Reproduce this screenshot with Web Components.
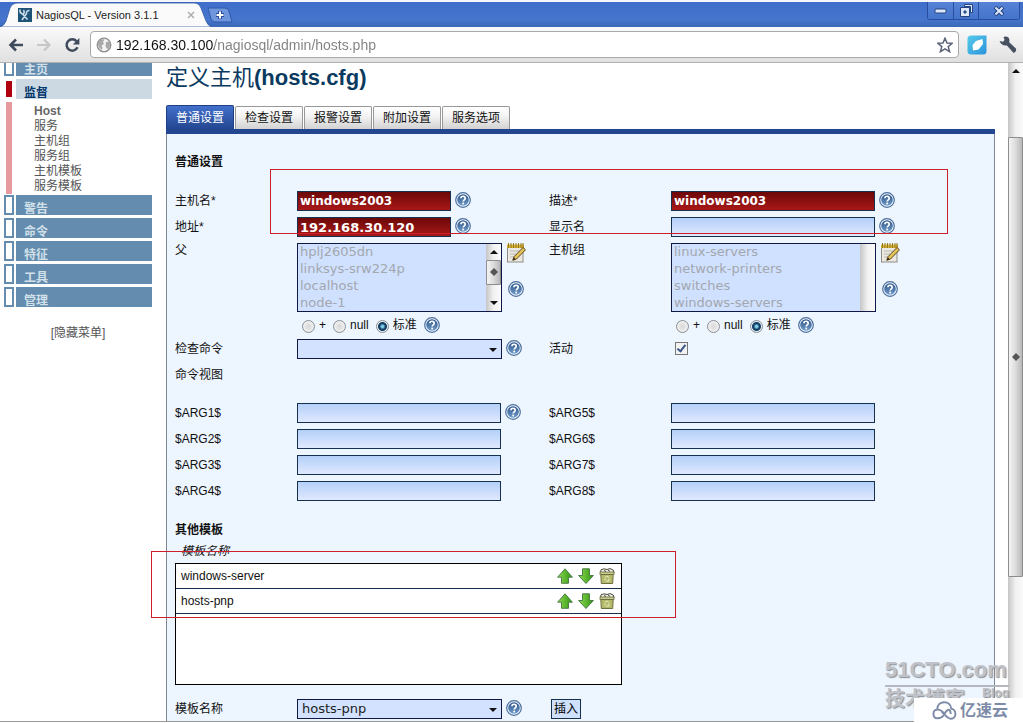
<!DOCTYPE html>
<html lang="zh-CN">
<head>
<meta charset="utf-8">
<title>NagiosQL - Version 3.1.1</title>
<style>
html, body { margin: 0; height: 100%; }
body { font: 12px/16px "Liberation Sans", "Noto Sans CJK SC", sans-serif; color: #111; background: #fff; overflow: hidden; }
</style>
</head>
<body>
<nq-browser></nq-browser>

<script>
const define = (name, html, setup) => {
  const template = document.createElement('template');
  template.innerHTML = html;
  customElements.define(name, class extends HTMLElement {
    constructor() {
      super();
      this.attachShadow({ mode: 'open' }).append(template.content.cloneNode(true));
    }
    connectedCallback() {
      if (setup && !this.ready) { this.ready = true; setup(this, this.shadowRoot); }
    }
  });
};

/* ---------- icons ---------- */
const icons = {
  help: `<svg viewBox="0 0 16 16"><defs><linearGradient id="g" x2="0" y2="1"><stop stop-color="#2d5488"/><stop offset="1" stop-color="#6f9bc9"/></linearGradient></defs><circle cx="8" cy="8" r="7.3" fill="#f4f8ff" stroke="#4b6f9e" stroke-width="1.2"/><circle cx="8" cy="8" r="5.8" fill="url(#g)"/><path d="M5.9 6.3C5.9 3.6 10.2 3.6 10.2 6.2C10.2 7.8 8.2 7.8 8.2 9.5" fill="none" stroke="#fff" stroke-width="1.7"/><rect x="7.3" y="10.6" width="1.8" height="1.8" fill="#fff"/></svg>`,
  edit: `<svg viewBox="0 0 20 20"><rect x="1.5" y="3" width="15.5" height="16" fill="#ece9e2" stroke="#8f8c86"/><rect x="1" y="1.5" width="17" height="3.5" fill="#d9b53a"/><path d="M2.5 0v5M5 0v5M7.500 0v5M10 0v5M12.500 0v5M15 0v5M17 0v5" stroke="#8a6d14" stroke-width=".9"/><path d="M4 8h9M4 11h6M4 14h4" stroke="#b9b6b0"/><path d="M17 4.500l2.500 2.300-9 9.200-3.700 1.200 1.300-3.600z" fill="#e3c45a" stroke="#5b451a" stroke-width="1"/><path d="M6.500 17.500l1.500-3 1.700 1.800z" fill="#2c2414"/></svg>`,
  up: `<svg viewBox="0 0 16 16"><defs><linearGradient id="g"><stop stop-color="#8edb52"/><stop offset="1" stop-color="#2f9410"/></linearGradient></defs><path d="M8 .8L15.400 9.200H11.500V15.300H4.500V9.200H.6z" fill="url(#g)" stroke="#4f7d4a"/></svg>`,
  down: `<svg viewBox="0 0 16 16"><defs><linearGradient id="g"><stop stop-color="#8edb52"/><stop offset="1" stop-color="#2f9410"/></linearGradient></defs><path d="M8 15.500L15.400 7.500H11.500V.8H4.500V7.500H.6z" fill="url(#g)" stroke="#4f7d4a"/></svg>`,
  trash: `<svg viewBox="0 0 16 16"><path d="M1.500 5L2 1.800 5 .8 8 1.500 11 .6 14.200 2 15 5z" fill="#f2f2ea" stroke="#4b4a3c"/><path d="M5 2.500l2 1M9 2l2 1.500" stroke="#444"/><rect x="1" y="4" width="14" height="2.500" fill="#c9cb92" stroke="#6b6c3c" stroke-width=".8"/><path d="M1.800 6.500H14.200L13.700 15.500H2.300z" fill="#b4b96c" stroke="#6f7040"/><path d="M6 9.500l2-1.500 2 1.500M10 10.500v2.500H7M6 12.500v-2" fill="none" stroke="#e9edc0"/></svg>`,
  back: `<svg viewBox="0 0 16 16"><path d="M15 8H3M8 2.500L2.500 8 8 13.500" fill="none" stroke="#3f4a5c" stroke-width="2.600"/></svg>`,
  forward: `<svg viewBox="0 0 16 16"><path d="M1 8H13M8 2.500L13.500 8 8 13.500" fill="none" stroke="#c6c6c8" stroke-width="2.200"/></svg>`,
  reload: `<svg viewBox="0 0 16 16"><path d="M12.600 4.200A5.700 5.700 0 1 0 13.500 10.300" fill="none" stroke="#3f4a5c" stroke-width="2.500"/><path d="M15.400 1V7.600H8.800z" fill="#3f4a5c"/></svg>`,
  globe: `<svg viewBox="0 0 16 16"><circle cx="8" cy="8" r="6.800" fill="#f4f4f4" stroke="#8d8d8d" stroke-width="1.300"/><path d="M3 3.500Q6 1.500 8.500 2.500L7 5 8 7 5.500 8.500 6.500 11 5.500 13Q2 10 1.800 6.500zM10 5l3.500-.5Q15 8 13 11.500L11 12 9.500 9z" fill="#a9a9a9"/></svg>`,
  star: `<svg viewBox="0 0 16 16"><path d="M8 1.200L10 6 15.200 6.300 11.200 9.600 12.600 14.700 8 11.800 3.400 14.700 4.800 9.600.8 6.300 6 6z" fill="#fff" stroke="#5c6478" stroke-width="1.500"/></svg>`,
  feather: `<svg viewBox="0 0 20 20"><defs><linearGradient id="g" x2="1" y2="1"><stop stop-color="#56cbe8"/><stop offset="1" stop-color="#2a92dd"/></linearGradient></defs><path d="M4 .5H19.500V16Q19.500 19.500 16 19.500H4Q.5 19.500.5 16V4Q.5.5 4 .5z" fill="url(#g)"/><path d="M9 6L15.500 4 16 9 11.500 14.500 6 15.500 5.500 10z" fill="#fff"/></svg>`,
  wrench: `<svg viewBox="0 0 16 16"><path d="M.5 4.500L3.500 5 5 3.500 4 .8Q8.500-.3 9.300 3.500L9.100 5.500 15 11.200Q16 14 13 15L7 8.400Q2 9 .5 4.500z" fill="#46505f"/></svg>`,
  favicon: `<svg viewBox="0 0 14 14"><rect width="14" height="14" fill="#1e5377"/><path d="M2 1.500Q1.500 5 4.500 6L9.500 11.500M5.500 2Q7 4 5.500 6M11.500 2.500Q8 2.500 8.500 5.500L4 12" fill="none" stroke="#c9dce8" stroke-width="1.600"/></svg>`,
  cloud: `<svg viewBox="0 0 26 20"><g fill="none" stroke="#7d8ba8" stroke-width="2"><path d="M5.500 8.500C5.500-1 19.500-1 20 8"/><path d="M13 13.500C9 7.500 1.500 7.500 1.500 13.500S9.500 19.500 13 13.500 19 8 19.500 13.500"/><path d="M19.500 8C26 8 26 19 19.500 18.500 16 18.500 13 14 10 11"/></g></svg>`
};
customElements.define('nq-icon', class extends HTMLElement {
  connectedCallback() {
    if (this.shadowRoot) return;
    const size = this.getAttribute('size') || '16';
    this.attachShadow({ mode: 'open' }).innerHTML =
      `<style>:host{display:block;flex:none;width:${size}px}svg{display:block;width:100%}</style>` + icons[this.getAttribute('name')];
  }
});

/* ---------- title strip with the page tab ---------- */
define('nq-titlebar', `
<style>
:host { display: flex; justify-content: space-between; height: 25px; border-top: 2px solid #f3f5f8; background: linear-gradient(#3f6ecb, #4575cc 70%, #3c68b8); }
.left { display: flex; }
.tab { position: relative; display: flex; align-items: center; box-sizing: border-box; width: 212px; padding: 0 17px 0 18px; font-size: 11px; }
.tab .shape { position: absolute; left: 0; top: 0; width: 212px; height: 25px; }
.tab > :not(.shape) { position: relative; }
.title { flex: 1; margin-left: 4px; color: #222; white-space: nowrap; }
button { font: inherit; padding: 0; border: 0; background: none; display: grid; place-items: center; }
.new { margin-left: -4px; }
.new svg { display: block; width: 26px; height: 16px; }
.win { display: flex; height: 17px; margin-right: 3px; border: 1px solid #274d9c; border-top: 0; border-radius: 0 0 3px 3px; }
.win button { width: 25px; background: linear-gradient(#5682d6, #4474cb); }
.win button + button { border-left: 1px solid #274d9c; }
.win button:last-child { width: 41px; }
</style>
<div class="left">
  <div class="tab">
    <svg class="shape" viewBox="0 0 212 25"><path d="M0 25Q4 24 6 19L10 6Q12 1 18 1H194Q199 1 201 6L206 19Q208 24 212 25z" fill="#fafafa" stroke="#2f59a8" stroke-width=".8"/></svg>
    <nq-icon name="favicon" size="14"></nq-icon>
    <span class="title">NagiosQL - Version 3.1.1</span>
    <button aria-label="Close tab"><svg width="8" height="8" viewBox="0 0 8 8"><path d="M1 1l6 6M7 1L1 7" stroke="#aaa" stroke-width="1.400"/></svg></button>
  </div>
  <button class="new" aria-label="New tab"><svg viewBox="0 0 26 16"><path d="M0 1H17Q20 1 21 4L24 15H7Q4 15 3 12z" fill="#6f96dd" stroke="#2f59a8"/><path d="M12 4v8M8 8h8" stroke="#294f96" stroke-width="4"/><path d="M12 4.500v7M8.500 8h7" stroke="#fff" stroke-width="2"/></svg></button>
</div>
<div class="win">
  <button aria-label="Minimize"><svg width="13" height="6"><rect x="1" y="1" width="11" height="4" rx="1" fill="#dfe8f8" stroke="#24437f"/></svg></button>
  <button aria-label="Restore"><svg width="13" height="13" viewBox="0 0 13 13"><path d="M4.500.5h8v8h-2v-6h-6z" fill="#dfe8f8" stroke="#24437f"/><path d="M.5 3.500h9v9h-9zM4 7h2v2H4z" fill="#dfe8f8" fill-rule="evenodd" stroke="#24437f"/></svg></button>
  <button aria-label="Close"><svg width="12" height="10" viewBox="0 0 12 10"><path d="M2 1l8 8M10 1L2 9" stroke="#24437f" stroke-width="4"/><path d="M2.500 1.500l7 7M9.500 1.500l-7 7" stroke="#dfe8f8" stroke-width="2"/></svg></button>
</div>`);

/* ---------- navigation bar ---------- */
define('nq-toolbar', `
<style>
:host { display: flex; align-items: center; box-sizing: border-box; height: 36px; padding: 0 6px 0 8px; background: linear-gradient(#fafafa, #e0e0e0); border-bottom: 1px solid #b0b0b0; }
button { padding: 0; border: 0; background: none; }
.nav { display: flex; gap: 12px; margin-right: 10px; }
.box { flex: 1; display: flex; align-items: center; gap: 4px; height: 25px; padding: 0 5px; border: 1px solid #a9a9a9; border-radius: 4px; background: #fff; }
input { flex: 1; min-width: 0; border: 0; padding: 0; outline: 0; font: 14px/20px "Liberation Sans", sans-serif; background: linear-gradient(90deg, #111 98px, #808080 98px); background-clip: text; -webkit-background-clip: text; -webkit-text-fill-color: transparent; color: #111; }
.ext { margin: 0 12px 0 8px; }
</style>
<div class="nav">
  <button aria-label="Back"><nq-icon name="back"></nq-icon></button>
  <button aria-label="Forward"><nq-icon name="forward"></nq-icon></button>
  <button aria-label="Reload"><nq-icon name="reload"></nq-icon></button>
</div>
<div class="box">
  <nq-icon name="globe"></nq-icon>
  <input type="text" aria-label="Address" value="192.168.30.100/nagiosql/admin/hosts.php">
  <button aria-label="Bookmark"><nq-icon name="star"></nq-icon></button>
</div>
<button class="ext" aria-label="Extension"><nq-icon name="feather" size="20"></nq-icon></button>
<button aria-label="Settings"><nq-icon name="wrench" size="18"></nq-icon></button>`);

/* ---------- scrollbar ---------- */
define('nq-scrollbar', `
<style>
:host { display: flex; flex-direction: column; align-items: stretch; box-sizing: border-box; width: 15px; background: linear-gradient(90deg, #c6c6c6, #f1f1f1 50%, #fafafa); }
i { display: grid; place-items: center; flex: none; height: 16px; }
svg { display: block; }
.space { flex: var(--before, 1); }
.rest { flex: var(--after, 1); }
.thumb { flex: var(--thumb, 1); box-sizing: border-box; border: 1px solid #8d8d8d; border-radius: 1px; display: grid; place-items: center; background: linear-gradient(90deg, #f4f4f4, #dcdcdc 50%, #b9b9b9); }
:host([idle]) > * { display: none; }
:host([idle]) > *, :host([idle]) i { display: none; }
</style>
<i><svg width="8" height="4"><path d="M0 4L4 0l4 4z" fill="#111"/></svg></i>
<span class="space"></span>
<span class="thumb"><svg width="8" height="8"><path d="M4 0l4 4-4 4-4-4z" fill="#555"/></svg></span>
<span class="rest"></span>
<i><svg width="8" height="4"><path d="M0 0h8L4 4z" fill="#111"/></svg></i>`);

/* ---------- side menu ---------- */
define('nq-menu-item', `
<style>
:host { display: flex; gap: 2px; height: 20px; margin-top: 3px; }
:host([cut]) { height: 13px; margin-top: 0; align-items: flex-end; overflow: hidden; }
.mark { box-sizing: border-box; width: 10px; height: 20px; border: 2px solid #638cae; background: #fff; }
a { flex: 1; box-sizing: border-box; height: 20px; padding: 6px 8px 0; overflow: hidden; line-height: 16px; font-weight: bold; color: #d2e0ea; background: #638cae; text-decoration: none; }
:host([current]) .mark { border-color: #fff; background: #b00010; }
:host([current]) a { background: #ccd9e3; color: #00356b; }
</style>
<span class="mark"></span><a href="#"><slot></slot></a>`);

define('nq-menu', `
<style>
:host { display: block; width: 148px; }
ul { margin: 3px 0 -2px 2px; padding: 2px 0 0 22px; list-style: none; border-left: 6px solid #e69a9f; line-height: 15px; }
a { color: #555; text-decoration: none; }
.on { font-weight: bold; color: #666; }
.hide { margin: 18px 0 0; text-align: center; }
</style>
<nq-menu-item cut>主页</nq-menu-item>
<nq-menu-item current>监督</nq-menu-item>
<ul>
  <li><a class="on" href="#">Host</a></li><li><a href="#">服务</a></li><li><a href="#">主机组</a></li>
  <li><a href="#">服务组</a></li><li><a href="#">主机模板</a></li><li><a href="#">服务模板</a></li>
</ul>
<nq-menu-item>警告</nq-menu-item>
<nq-menu-item>命令</nq-menu-item>
<nq-menu-item>特征</nq-menu-item>
<nq-menu-item>工具</nq-menu-item>
<nq-menu-item>管理</nq-menu-item>
<p class="hide"><a href="#">[隐藏菜单]</a></p>`);

/* ---------- tab strip ---------- */
define('nq-tabs', `
<style>
:host { display: flex; align-items: flex-end; gap: 1px; height: 24px; border-bottom: 5px solid #234690; }
button { box-sizing: border-box; width: 68px; height: 23px; padding: 0; border: 1px solid #989898; border-bottom: 0; border-radius: 2px 2px 0 0; font: inherit; color: #111; background: linear-gradient(#fff, #f4f4f4 40%, #d2d2d2); }
.on { height: 24px; border-color: #1f3f85; color: #fff; background: linear-gradient(#4270cc, #234690); }
</style>
<button class="on">普通设置</button><button>检查设置</button><button>报警设置</button><button>附加设置</button><button>服务选项</button>`);

/* ---------- labelled form field ---------- */
define('nq-field', `
<style>
:host { display: grid; grid-template-columns: 122px 1fr; min-height: 20px; }
label { line-height: 20px; }
:host([kind=list]) > label { line-height: 14px; }
.line { display: flex; align-items: flex-start; gap: 4px; }
.line > nq-icon { margin-top: 1px; }
.text { box-sizing: border-box; width: 204px; height: 20px; padding: 0 2px; border: 1px solid #16304f; border-radius: 0; outline: 0; font: 13px/18px "DejaVu Sans", sans-serif; background: linear-gradient(#b4d0f8, #e0e8ff); }
.must { font-size: 12px; font-weight: bold; color: #fff; background: linear-gradient(#6d0808, #a81818); }
.short { width: 154px; }
.wide { font-size: 13px; }
.drop { position: relative; width: 205px; }
.drop::after { content: ""; position: absolute; right: 5px; top: 9px; border: 4px solid transparent; border-top-color: #111; border-bottom: 0; pointer-events: none; }
.drop select { appearance: none; display: block; width: 100%; box-sizing: border-box; height: 20px; padding: 0 4px; border: 1px solid #101848; border-radius: 0; font: 13px/18px "DejaVu Sans", sans-serif; color: #222; background: #d2e2ff; }
.list { display: flex; box-sizing: border-box; width: 205px; height: 69px; border: 1px solid #101848; background: #d0e1ff; }
.list select { flex: 1; min-width: 0; height: 67px; padding: 0; border: 0; outline: 0; overflow: hidden; font: 13px/17px "DejaVu Sans", sans-serif; color: #a3a7ae; background: none; }
.list option { height: 17px; min-height: 17px; padding: 0 2px; line-height: 17px; }
.tools { display: flex; flex-direction: column; align-items: center; gap: 18px; }
.modes { display: flex; align-items: center; height: 16px; margin-top: 5px; padding-left: 5px; }
.modes label { line-height: 16px; margin: 0 7px 0 4px; }
input[type=radio] { appearance: none; flex: none; width: 13px; height: 13px; margin: 2px 0 0; border: 1px solid #8a8f96; border-radius: 50%; background: radial-gradient(#d8d8d8, #fafafa); }
input[type=radio]:checked { background: radial-gradient(circle, #7fd0e8 0 1px, #123f66 3px 4px, #e8eef4 5px); }
input[type=checkbox] { appearance: none; display: grid; place-items: center; width: 13px; height: 13px; margin: 3px 4px; border: 1px solid #777; background: #f2f2f2; }
input[type=checkbox]:checked::before { content: ""; width: 3px; height: 7px; margin-bottom: 2px; border: solid #3b5686; border-width: 0 2px 2px 0; transform: rotate(38deg); }
</style>
<label for="c"></label><div class="control"></div>`, (host, root) => {
  const get = n => host.getAttribute(n);
  root.querySelector('label').textContent = get('label');
  const help = host.hasAttribute('help') ? '<nq-icon name="help"></nq-icon>' : '';
  const options = (get('options') || '').split(',').map(o => `<option>${o}</option>`).join('');
  const kinds = {
    text: () => `<div class="line"><input id="c" type="text" class="text ${get('look') || ''}" value="${get('value') || ''}">${help}</div>`,
    drop: () => `<div class="line"><div class="drop"><select id="c">${options}</select></div>${help}<slot></slot></div>`,
    check: () => `<input id="c" type="checkbox" checked>`,
    none: () => '',
    list: () => `<div class="line"><div class="list"><select id="c" multiple size="4">${options}</select><nq-scrollbar style="--before:0;--thumb:24;--after:11" ${host.hasAttribute('idle') ? 'idle' : ''}></nq-scrollbar></div>
      <div class="tools"><nq-icon name="edit" size="20"></nq-icon>${help}</div></div>
      <div class="modes"><input type="radio" name="m" id="a"><label for="a">+</label><input type="radio" name="m" id="b"><label for="b">null</label><input type="radio" name="m" id="d" checked><label for="d">标准</label>${help}</div>`
  };
  root.querySelector('.control').innerHTML = kinds[get('kind') || 'text']();
});

/* ---------- assigned templates ---------- */
define('nq-templates', `
<style>
:host { display: block; width: 447px; }
.head { margin: 0 0 4px 6px; line-height: 15px; font-style: italic; }
.box { box-sizing: border-box; height: 122px; border: 1px solid #000; background: #fff; }
table { width: 100%; border-collapse: collapse; }
td { height: 24px; padding: 0 6px 0 5px; border-bottom: 1px solid #16304f; }
.acts { display: flex; justify-content: flex-end; align-items: center; gap: 5px; }
button { padding: 0; border: 0; background: none; }
</style>
<div class="head" id="h">模板名称</div>
<div class="box"><table aria-labelledby="h"><tbody></tbody></table></div>`, (host, root) => {
  root.querySelector('tbody').innerHTML = ['windows-server', 'hosts-pnp'].map(n => `<tr><td>${n}</td><td><div class="acts">
    <button aria-label="上移"><nq-icon name="up"></nq-icon></button><button aria-label="下移"><nq-icon name="down"></nq-icon></button><button aria-label="删除"><nq-icon name="trash"></nq-icon></button></div></td></tr>`).join('');
});

/* ---------- host form ---------- */
define('nq-host-form', `
<style>
:host { display: block; flex: 1; padding: 20px 8px 0; border: 1px solid #7f8894; border-width: 0 1px; background: #edf5ff; }
h2 { margin: 0 0 21px; font-size: 12px; line-height: 16px; }
.grid { display: grid; grid-template-columns: 374px 1fr; gap: 6px 0; }
.args { margin: 18px 0 21px; }
.second { margin-bottom: 6px; }
.pick { margin-top: 14px; }
.pick button { height: 20px; margin-left: 25px; padding: 0 2px; border: 1px solid #16304f; font: 12px/16px "Liberation Sans", "Noto Sans CJK SC", sans-serif; background: #cfe0fb; }
</style>
<h2>普通设置</h2>
<div class="grid">
  <nq-field label="主机名*" look="must short" value="windows2003" help></nq-field>
  <nq-field label="描述*" look="must" value="windows2003" help></nq-field>
  <nq-field label="地址*" look="must short wide" value="192.168.30.120" help></nq-field>
  <nq-field label="显示名" help></nq-field>
  <nq-field label="父" kind="list" options="hplj2605dn,linksys-srw224p,localhost,node-1" help></nq-field>
  <nq-field label="主机组" kind="list" options="linux-servers,network-printers,switches,windows-servers" help idle></nq-field>
  <nq-field label="检查命令" kind="drop" help></nq-field>
  <nq-field label="活动" kind="check"></nq-field>
  <nq-field label="命令视图" kind="none"></nq-field>
</div>
<div class="grid args">
  <nq-field label="$ARG1$" help></nq-field><nq-field label="$ARG5$"></nq-field>
  <nq-field label="$ARG2$"></nq-field><nq-field label="$ARG6$"></nq-field>
  <nq-field label="$ARG3$"></nq-field><nq-field label="$ARG7$"></nq-field>
  <nq-field label="$ARG4$"></nq-field><nq-field label="$ARG8$"></nq-field>
</div>
<h2 class="second">其他模板</h2>
<nq-templates></nq-templates>
<nq-field class="pick" label="模板名称" kind="drop" options="hosts-pnp" help><button>插入</button></nq-field>`);

/* ---------- corner stamps ---------- */
define('nq-stamp', `
<style>
:host { position: absolute; right: 0; bottom: 0; width: 138px; color: #bfc3c9; font-weight: bold; text-shadow: 1px 1px 1px #8c9096; }
.name { width: 124px; border-bottom: 2px solid #b4b8be; font: bold 22px/30px "Liberation Sans", sans-serif; white-space: nowrap; }
.sub { display: flex; justify-content: space-between; width: 124px; height: 36px; font-size: 20px; line-height: 24px; }
.sub span + span { font-size: 12px; line-height: 12px; }
.brand { position: absolute; right: 0; bottom: 0; display: flex; align-items: center; gap: 3px; box-sizing: border-box; width: 109px; height: 25px; padding-left: 18px; background: #fff; color: #7d8ba8; font-size: 16px; text-shadow: none; }
</style>
<div class="name">51CTO.com</div>
<div class="sub"><span>技术博客</span><span>Blog</span></div>
<div class="brand"><nq-icon name="cloud" size="25"></nq-icon>亿速云</div>`);

/* ---------- whole window ---------- */
define('nq-browser', `
<style>
:host { display: flex; flex-direction: column; height: 100vh; position: relative; overflow: hidden; }
.view { position: relative; flex: 1; min-height: 0; display: flex; overflow: hidden; padding-left: 4px; border-bottom: 1px solid #999; margin-bottom: 1px; }
main { flex: 1; display: flex; flex-direction: column; margin: 0 13px 0 14px; }
h1 { margin: 0; padding-bottom: 12px; font-size: 22px; line-height: 30px; color: #0b3a60; }
h1 span { font-weight: normal; }
.bar { --before: 58; --thumb: 440; --after: 128; }
.note { position: absolute; box-sizing: border-box; border: 1px solid #cc1f2b; pointer-events: none; }
.n1 { left: 270px; top: 106px; width: 678px; height: 65px; }
.n2 { left: 151px; top: 488px; width: 525px; height: 67px; }
</style>
<nq-titlebar></nq-titlebar>
<nq-toolbar></nq-toolbar>
<div class="view">
  <nq-menu></nq-menu>
  <main>
    <h1><span>定义主机</span>(hosts.cfg)</h1>
    <nq-tabs></nq-tabs>
    <nq-host-form></nq-host-form>
  </main>
  <nq-scrollbar class="bar"></nq-scrollbar>
  <div class="note n1"></div>
  <div class="note n2"></div>
</div>
<nq-stamp></nq-stamp>`);
</script>
</body>
</html>
